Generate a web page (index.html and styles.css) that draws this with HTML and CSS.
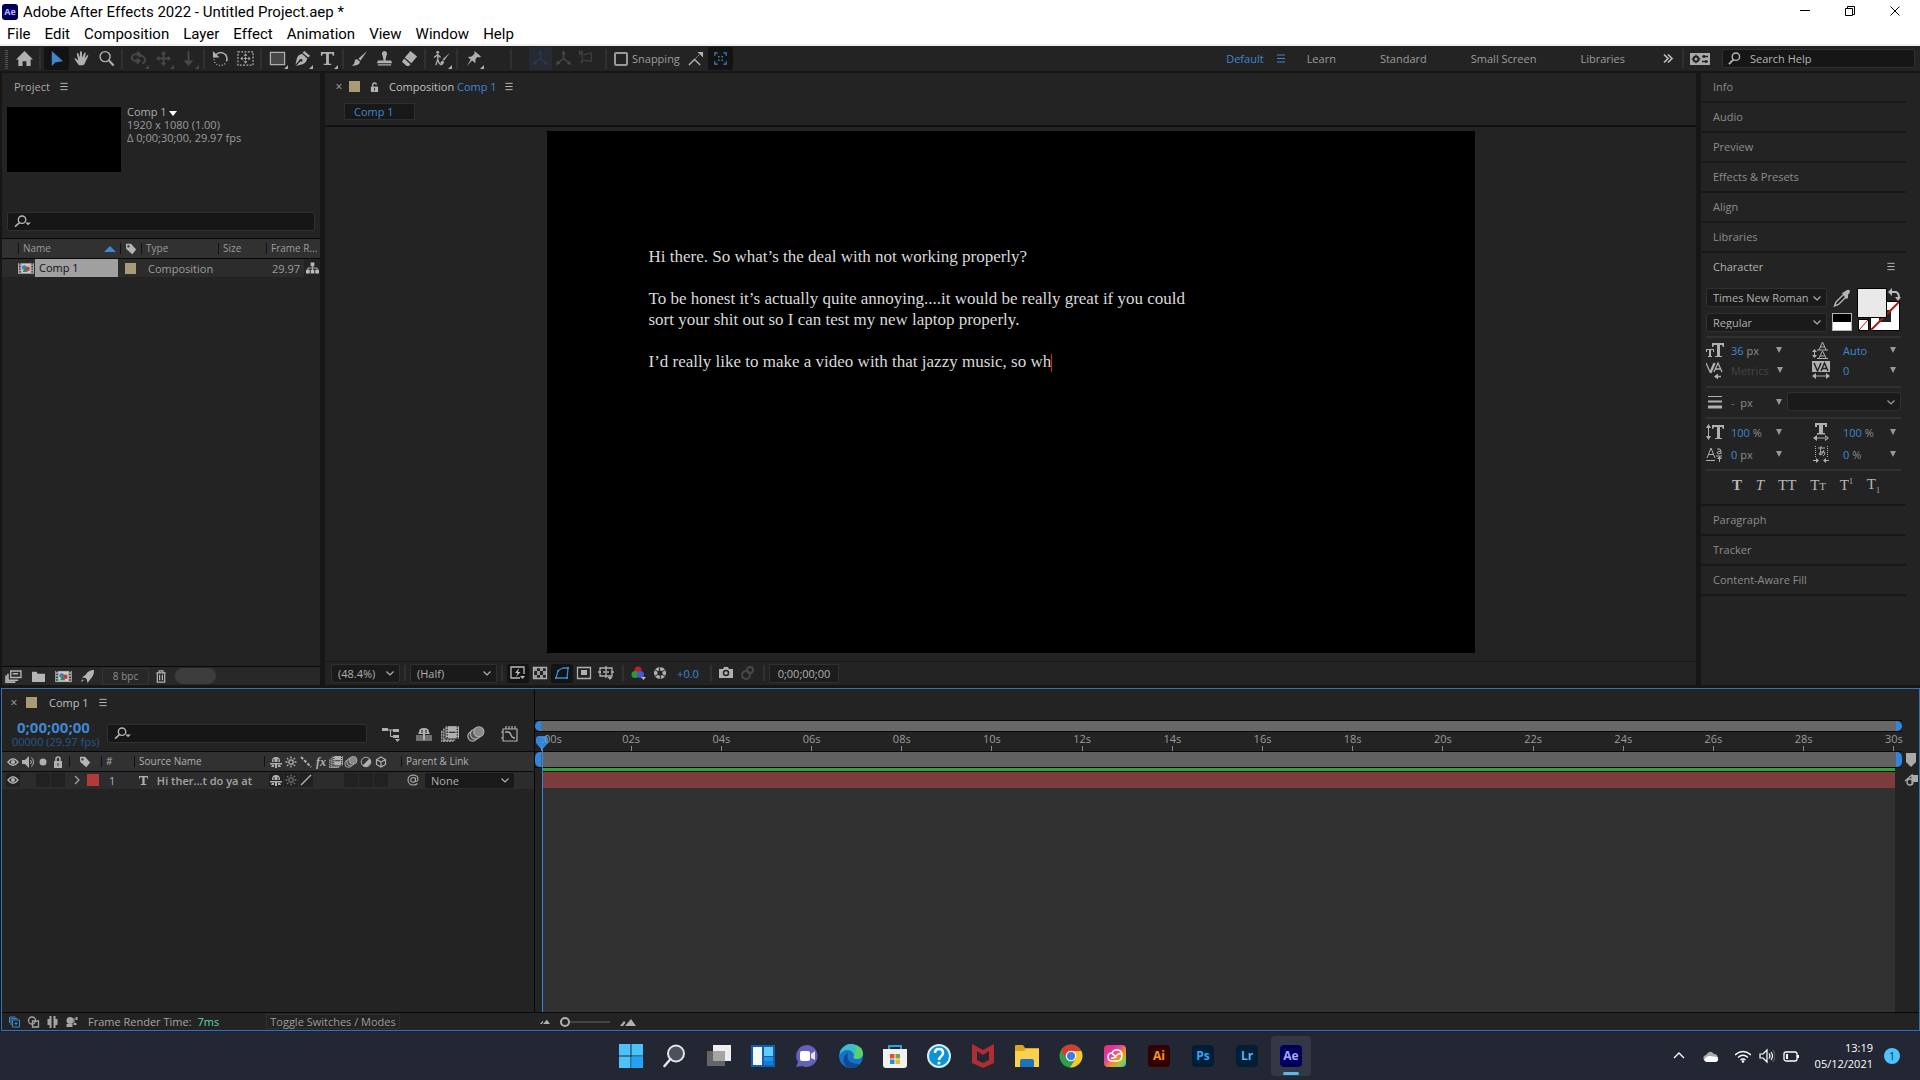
FILE: index.html
```html
<!DOCTYPE html>
<html lang="en">
<head>
  <meta charset="UTF-8">
  <title>Adobe After Effects 2022 - Untitled Project.aep *</title>
  <link rel="stylesheet" href="styles.css">
</head>
<body>
  <!-- shared icons -->
  <svg class="sprite" aria-hidden="true">
    <symbol id="menu" viewBox="0 0 10 10"><path d="M1 1.500h8M1 5h8M1 8.500h8" stroke="currentColor" stroke-width="1.100"/></symbol>
    <symbol id="chev" viewBox="0 0 10 10"><path d="M1.500 3.500 5 7l3.500-3.500" fill="none" stroke="currentColor" stroke-width="1.200"/></symbol>
    <symbol id="tri" viewBox="0 0 8 8"><path d="M1 1h6L4 7z" fill="currentColor"/></symbol>
    <symbol id="corner" viewBox="0 0 4 4"><path d="M4 0v4H0z" fill="currentColor"/></symbol>
    <symbol id="find" viewBox="0 0 18 14"><circle cx="8.500" cy="5" r="4" fill="none" stroke="currentColor" stroke-width="1.500"/><path d="M6 8 1 12.500" stroke="currentColor" stroke-width="1.700"/><path d="M12 8h6l-3 3z" fill="currentColor"/></symbol>
    <symbol id="tag" viewBox="0 0 14 14"><path fill="currentColor" fill-rule="evenodd" d="M1 2q0-1 1-1h5l6 6.500L8.500 13 1.500 7zM4 2.500A1.400 1.400 0 1 0 4 5.300a1.400 1.400 0 0 0 0-2.800z"/></symbol>
    <symbol id="comp" viewBox="0 0 18 14"><path fill="#aaa" d="M0 1h18v12H0z"/><path d="M2 1v12M16 1v12" stroke="#222" stroke-width="1.600" stroke-dasharray="1.500 1.500"/><path fill="#ccc" d="M4 2h10v10H4z"/><circle cx="7" cy="6" r="2.600" fill="#3b7fc0"/><path d="M9 5h4v4.500H9z" fill="#c03b33"/><path d="m8 6.500 3 4.500H5z" fill="#368c4a"/></symbol>
    <symbol id="eye" viewBox="0 0 14 12"><path fill="none" stroke="currentColor" stroke-width="1.500" d="M2 6q5-6.500 10 0-5 6.500-10 0z"/><circle cx="7" cy="6" r="2.100" fill="currentColor"/></symbol>
    <symbol id="shy" viewBox="0 0 14 12"><path fill="currentColor" d="M3 5q0-4 4-4t4 4v1H3zM1 7h12v1.500H1zM6 8h2v4H6zM3 9h2v2H2zM9 9h2l1 2H9z"/><path d="M5 3v3M9 3v3" stroke="#333"/></symbol>
    <symbol id="sun" viewBox="0 0 12 12"><circle cx="6" cy="6" r="2.200" fill="none" stroke="currentColor" stroke-width="1.300"/><path d="M6 .5v2M6 9.500v2M.5 6h2M9.500 6h2M2 2l1.400 1.400M8.600 8.600 10 10M10 2 8.600 3.400M3.400 8.600 2 10" stroke="currentColor" stroke-width="1.300"/></symbol>
    <symbol id="film" viewBox="0 0 16 14"><path fill="currentColor" d="M4 0h12v11H4z"/><path d="M5.500 0v11M14.500 0v11" stroke="#222" stroke-width="1.200" stroke-dasharray="1.200 1.200"/><path d="M7 5.500h6" stroke="#222"/><path d="M2.500 2v10.500H13M.7 4v9.300H11" fill="none" stroke="currentColor" stroke-width="1.200" stroke-dasharray="2 .6"/></symbol>
    <symbol id="blur" viewBox="0 0 16 14"><circle cx="5" cy="9" r="4.300" fill="#444" stroke="currentColor"/><circle cx="7.500" cy="7" r="4.500" fill="#555" stroke="currentColor"/><circle cx="10.500" cy="5" r="4.500" fill="#888" stroke="currentColor"/></symbol>
    <symbol id="hills" viewBox="0 0 16 8"><path d="m5 8 6-7 5 7zM0 8l4-5 1.500 1.500L3 8z" fill="currentColor"/></symbol>
    <symbol id="axis" viewBox="0 0 16 16"><path d="M8 8V2M8 8l-5 4M8 8l5 4" stroke="currentColor" stroke-width="1.500"/><path d="m8 0 2 4H6zM1 14l1-4 3 3zM15 14l-1-4-3 3z" fill="currentColor"/></symbol>
  </svg>

  <header>
    <div class="titlebar">
      <span class="app-badge">Ae</span>
      <span class="window-title">Adobe After Effects 2022 - Untitled Project.aep *</span>
      <div class="window-buttons">
        <button aria-label="Minimise"><svg viewBox="0 0 12 12"><path d="M1 5.500h10" stroke="#000"/></svg></button>
        <button aria-label="Restore"><svg viewBox="0 0 12 12"><path d="M1.500 3.500h7v7h-7zM3.500 3V1.500h7v8H9" fill="none" stroke="#000"/></svg></button>
        <button aria-label="Close"><svg viewBox="0 0 12 12"><path d="m1.500 1.500 9 9m0-9-9 9" stroke="#000"/></svg></button>
      </div>
    </div>
    <nav class="menubar">
      <button>File</button><button>Edit</button><button>Composition</button><button>Layer</button><button>Effect</button><button>Animation</button><button>View</button><button>Window</button><button>Help</button>
    </nav>
  </header>

  <div class="toolbar">
    <div class="tools">
      <i class="grip"></i>
      <button aria-label="Home"><svg viewBox="0 0 18 18"><path fill="currentColor" d="M9 1 0 10h2.500v7H7v-5h4v5h4.500v-7H18z"/></svg></button>
      <i class="sep"></i>
      <button class="on" aria-label="Selection"><svg viewBox="0 0 18 18"><path fill="currentColor" d="M4 1v16l4-4 8-1z"/></svg></button>
      <button aria-label="Hand"><svg viewBox="0 0 18 18"><path fill="currentColor" d="M6 16 1.500 9.500q0-1.500 2 0L5.500 11 4 4q.8-1.800 1.800 0L7 8 7.500 2q1-1.800 1.900 0L9.700 8 12 3q1.500-1.200 1.500.6L12.300 9l2.700-3.500q1.600-.5 1 1.200L12.500 14q-.5 3-6.500 2z"/></svg></button>
      <button aria-label="Zoom"><svg viewBox="0 0 18 18"><circle cx="7.500" cy="7" r="5.300" fill="none" stroke="currentColor" stroke-width="1.500"/><path d="m11.500 11 5 5.500" stroke="currentColor" stroke-width="2.300"/></svg></button>
      <i class="sep"></i>
      <button disabled aria-label="Orbit"><svg viewBox="0 0 18 18"><path fill="none" stroke="currentColor" stroke-width="2" d="M8 12q-7-1-6-5 2-4 8-2t6 6q-1 3-3 3"/><path fill="currentColor" d="m7 8 5 3-5 5zM6 4l3-3 4 5-3 2z"/></svg><svg class="corner"><use href="#corner"/></svg></button>
      <button disabled aria-label="Pan camera"><svg viewBox="0 0 18 18"><path fill="currentColor" d="M9 1 6 4.500h2V8H4.500V6L1 9l3.500 3v-2H8v3.500H6L9 17l3-3.500h-2V10h3.500v2L17 9l-3.500-3v2H10V4.500h2z"/></svg><svg class="corner"><use href="#corner"/></svg></button>
      <button disabled aria-label="Dolly"><svg viewBox="0 0 18 18"><path fill="currentColor" d="M8 1h2v10h4l-5 6-5-6h4z"/></svg><svg class="corner"><use href="#corner"/></svg></button>
      <i class="sep"></i>
      <button aria-label="Rotation"><svg viewBox="0 0 18 18"><path fill="none" stroke="currentColor" stroke-width="1.700" d="M3.500 5.500Q9 0 14.500 5q2 3 1 7"/><path fill="none" stroke="currentColor" stroke-width="1.500" stroke-dasharray="1 2" d="M14 14.500Q8 18.500 3.500 14q-2-3-1-7"/><path d="M1 1v7h7z" fill="currentColor"/></svg></button>
      <button aria-label="Pan behind"><svg viewBox="0 0 18 18"><rect x="1" y="2" width="16" height="14" fill="none" stroke="currentColor" stroke-width="1.300" stroke-dasharray="2 1.500"/><path fill="currentColor" d="m9 3.500 2 2.500H7zM9 14.500 7 12h4zM3.500 9 6 7v4zM14.500 9 12 7v4z"/><path d="M9 7v4M7 9h4" stroke="currentColor"/></svg></button>
      <i class="sep"></i>
      <button aria-label="Rectangle"><svg viewBox="0 0 18 18"><path fill="#484848" stroke="currentColor" stroke-width="1.300" d="M1.500 2.500h15v13h-15z"/></svg><svg class="corner"><use href="#corner"/></svg></button>
      <button aria-label="Pen"><svg viewBox="0 0 18 18"><path fill="currentColor" d="m11 1 6 5-2 2-6-5zM8.500 4 14 9q-1 6-8 7l-4 1 5-5q2 1 2-1t-2-1.500T5.500 11L1.500 15.500 3 9q1-4 5.500-5z"/></svg><svg class="corner"><use href="#corner"/></svg></button>
      <button aria-label="Type"><svg viewBox="0 0 18 18"><path fill="currentColor" d="M2 2h14v4h-1.500L14 4h-3.500v10.500H13V16H5v-1.500h2.500V4H4l-.5 2H2z"/></svg><svg class="corner"><use href="#corner"/></svg></button>
      <i class="sep"></i>
      <button aria-label="Brush"><svg viewBox="0 0 18 18"><path fill="currentColor" d="M17 1 8 9l2 2.500zM7 10l2.500 2.500Q9 17 1 16.500 4 15 4 12t3-2z"/></svg></button>
      <button aria-label="Clone stamp"><svg viewBox="0 0 18 18"><path fill="currentColor" d="M9 1a3 3 0 0 1 2 5l-1 5h6l1 3H1l1-3h6L7 6a3 3 0 0 1 2-5zM2 15h14v1.500H2z"/></svg></button>
      <button aria-label="Eraser"><svg viewBox="0 0 18 18"><path fill="currentColor" d="m10 1 7 6-6 7-7-6zM3.300 9 10 15l-1.500 2H6l-5-4.500z"/></svg></button>
      <i class="sep"></i>
      <button aria-label="Roto brush"><svg viewBox="0 0 18 18"><circle cx="5" cy="2.500" r="1.500" fill="currentColor"/><path d="M5 5v5l-2 6M5 10l2 5M1 8l4-3 3 3" fill="none" stroke="currentColor" stroke-width="1.400"/><path fill="currentColor" d="m18 3-8 7 1.500 1.500zM10 11l2 2q-2 4-5 3 1-1 1-3z"/></svg><svg class="corner"><use href="#corner"/></svg></button>
      <i class="sep"></i>
      <button aria-label="Puppet pin"><svg viewBox="0 0 18 18"><path fill="currentColor" d="m10 1 7 6-2 1-2-.5L11 10v4l-3.500-3L2 17l4-7-3-2.500 4-.5 3-3z"/></svg><svg class="corner"><use href="#corner"/></svg></button>
      <i class="sep far"></i>
      <button disabled class="axis axis-on" aria-label="Local axis"><svg><use href="#axis"/></svg></button>
      <button disabled class="axis" aria-label="World axis"><svg><use href="#axis"/></svg></button>
      <button disabled class="axis" aria-label="View axis"><svg viewBox="0 0 18 18"><path d="M3 3l3 2 8-2v9l-8-1-3 3 2-5zM1 1l4 1-3 3z" fill="none" stroke="currentColor"/></svg></button>
      <i class="sep near"></i>
      <label class="snapping"><input type="checkbox">Snapping</label>
      <button aria-label="Snap edges"><svg viewBox="0 0 18 18"><path d="m2 16 6-6 6 6" fill="none" stroke="currentColor" stroke-width="1.500"/><path d="m9 9 4-4" stroke="currentColor" stroke-dasharray="2 1"/><path d="M11 2h6v6z" fill="currentColor"/></svg></button>
      <button class="on" aria-label="Snap features"><svg viewBox="0 0 18 18"><path d="M3 6V3h3M12 3h3v3M15 12v3h-3M6 15H3v-3M7 8V7h1M10 7h1v1M11 10v1h-1M8 11H7v-1" fill="none" stroke="currentColor" stroke-width="1.200"/></svg></button>
    </div>
    <div class="workspaces">
      <button class="blue">Default<svg><use href="#menu"/></svg></button>
      <button>Learn</button>
      <button>Standard</button>
      <button>Small Screen</button>
      <button>Libraries</button>
      <button class="more" aria-label="More workspaces"><svg viewBox="0 0 10 10"><path d="m1 1 4 4-4 4M5 1l4 4-4 4" fill="none" stroke="#bbb" stroke-width="1.700"/></svg></button>
    </div>
    <div class="help">
      <button aria-label="Settings"><svg viewBox="0 0 20 12"><path d="M0 0h20v12H0z" fill="#aaa"/><circle cx="6" cy="6" r="2.500" fill="none" stroke="#222" stroke-width="2"/><path d="M6 1.500v9M1.500 6h9" stroke="#222" stroke-dasharray="1.500 6"/><path d="M12 3.500h6M12 8.500h6M14 2v3M16 7v3" stroke="#222" stroke-width="1.500"/></svg></button>
      <label class="search-help"><svg viewBox="0 0 14 14"><circle cx="8.500" cy="5" r="4" fill="none" stroke="currentColor" stroke-width="1.500"/><path d="m6 8-5 5" stroke="currentColor" stroke-width="2"/></svg><input type="text" placeholder="Search Help" aria-label="Search Help"></label>
    </div>
  </div>

  <main class="panels">
    <section class="panel project">
      <div class="tab-row"><span>Project</span><button aria-label="Panel menu"><svg><use href="#menu"/></svg></button></div>
      <div class="preview">
        <div class="thumb"></div>
        <p><b>Comp 1 <svg viewBox="0 0 10 6"><path d="M0 0h10L5 6z" fill="#fff"/></svg></b><br>1920 x 1080 (1.00)<br>Δ 0;00;30;00, 29.97 fps</p>
      </div>
      <label class="search"><svg><use href="#find"/></svg><input type="text" aria-label="Search project"></label>
      <table class="items">
        <colgroup><col class="c-icon"><col class="c-name"><col class="c-tag"><col class="c-type"><col class="c-size"><col class="c-rate"><col></colgroup>
        <thead>
          <tr><th></th><th><span class="between">Name <svg viewBox="0 0 12 6"><path d="M0 6 6 0l6 6z" fill="#3e87cf"/></svg></span></th><th><svg class="i14"><use href="#tag"/></svg></th><th>Type</th><th>Size</th><th>Frame R...</th><th></th></tr>
        </thead>
        <tbody>
          <tr><td colspan="2"><span class="item-name"><svg><use href="#comp"/></svg><span>Comp 1</span></span></td><td><i class="swatch"></i></td><td>Composition</td><td></td><td class="num">29.97</td><td class="net"><svg viewBox="0 0 14 12"><path d="M5 0h4v4H5zM0 8h4v4H0zM5 8h4v4H5zM10 8h4v4h-4z" fill="#bbb"/><path d="M7 4v4M2 8V6h10v2" fill="none" stroke="#bbb"/></svg></td></tr>
        </tbody>
      </table>
      <div class="project-footer">
        <button aria-label="Interpret footage"><svg viewBox="0 0 18 14"><path d="M6 1h11v7H6z" fill="none" stroke="currentColor" stroke-width="1.500"/><path d="M8 4h6M3 4v7h11M1 6v7h10" fill="none" stroke="currentColor" stroke-width="1.800"/></svg></button>
        <button aria-label="New folder"><svg viewBox="0 0 18 14"><path d="M2 2h5l1 2h8v9H2z" fill="currentColor"/></svg></button>
        <button aria-label="New composition"><svg><use href="#comp"/></svg></button>
        <button aria-label="Project settings"><svg viewBox="0 0 18 14"><path d="M15 0q-6 0-9 5L2 8l4 .5L7 10l1 4 3-4q4-4 4-10zM2 10l2 1-3 2z" fill="currentColor"/></svg></button>
        <button class="bpc">8 bpc</button>
        <button aria-label="Delete"><svg viewBox="0 0 12 14"><path d="M1 3h10M4 3V1h4v2M2 3v10h8V3M4.500 5v6M7.500 5v6" fill="none" stroke="currentColor" stroke-width="1.300"/></svg></button>
        <i class="pill"></i>
      </div>
    </section>

    <section class="panel composition">
      <div class="tab-row">
        <button class="close">×</button><i class="swatch"></i>
        <svg class="lock" viewBox="0 0 10 11"><path d="M1 5h8v6H1z" fill="#b5b5b5"/><path d="M3 5V3q0-2 2-2t2 2" fill="none" stroke="#b5b5b5" stroke-width="1.500"/><path d="M5 6.500v3" stroke="#222"/></svg>
        <span class="light">Composition <span class="blue">Comp 1</span></span>
        <button aria-label="Panel menu"><svg><use href="#menu"/></svg></button>
      </div>
      <div class="crumbs"><button class="blue">Comp 1</button></div>
      <div class="viewer">
        <div class="stage">
          <p>Hi there. So what’s the deal with not working properly?</p>
          <p>To be honest it’s actually quite annoying....it would be really great if you could<br>sort your shit out so I can test my new laptop properly.</p>
          <p>I’d really like to make a video with that jazzy music, so wh<i class="caret"></i></p>
        </div>
      </div>
      <div class="viewer-footer">
        <span class="pick zoom-pick"><select aria-label="Magnification"><option>(48.4%)</option></select><svg><use href="#chev"/></svg></span>
        <i class="sep"></i>
        <span class="pick res-pick"><select aria-label="Resolution"><option>(Half)</option></select><svg><use href="#chev"/></svg></span>
        <i class="sep"></i>
        <button class="on plain" aria-label="Fast previews"><svg viewBox="0 0 16 14"><path d="M10 12H1V1h13v7" fill="none" stroke="currentColor" stroke-width="1.300"/><path d="M9 2 5 7h2.500L6 11l4.500-5H8z" fill="currentColor"/><path d="M10 10h5l-2.500 3z" fill="currentColor"/></svg></button>
        <button aria-label="Transparency grid"><svg viewBox="0 0 16 14"><path d="M1.500 1.500h13v11h-13z" fill="none" stroke="currentColor" stroke-width="1.300"/><path d="M2 2h3v3H2zM8 2h3v3H8zM5 5h3v4H5zM11 5h3v4h-3zM2 9h3v3H2zM8 9h3v3H8z" fill="#999"/></svg></button>
        <button class="on" aria-label="Mask visibility"><svg viewBox="0 0 16 14"><path d="m2 12 2-7q2-2 5-3h5l-1 10z" fill="none" stroke="currentColor" stroke-width="1.300"/><path d="M1 11h2v2H1zM3 4h2v2H3zM13 1h2v2h-2zM12 11h2v2h-2z" fill="currentColor"/></svg></button>
        <button aria-label="Region of interest"><svg viewBox="0 0 16 14"><path d="M1.500 1.500h13v11h-13z" fill="none" stroke="currentColor" stroke-width="1.300"/><path d="M5 4h6v5H5z" fill="currentColor"/></svg></button>
        <button aria-label="Grid and guides"><svg viewBox="0 0 16 14"><path d="M2 2h12v8H2zM8 0v5M8 7v5M0 6h3M5 6h6M13 6h3" fill="none" stroke="currentColor" stroke-width="1.300"/><path d="M9.500 11h5L12 14z" fill="currentColor"/></svg></button>
        <i class="sep wide"></i>
        <button aria-label="Channels"><svg viewBox="0 0 16 14"><circle cx="8" cy="4" r="3.500" fill="#c82020"/><circle cx="5" cy="8.500" r="3.500" fill="#22a02c"/><circle cx="10.500" cy="8.500" r="3.500" fill="#4457d8"/><path d="M11 11h5l-2.500 3z" fill="#bbb"/></svg></button>
        <button aria-label="Exposure"><svg viewBox="0 0 16 14"><circle cx="8" cy="7" r="4.300" fill="none" stroke="currentColor" stroke-width="3.500"/><path d="m8 1-1 5M13 4 9 6M13 10l-4-2M8 13l1-5M3 10l4-2M3 4l4 2" stroke="#222"/></svg></button>
        <button class="blue text">+0.0</button>
        <i class="sep wide"></i>
        <button aria-label="Snapshot"><svg viewBox="0 0 16 14"><path d="M1 3h4l1-2h4l1 2h4v9H1z" fill="currentColor"/><circle cx="8" cy="7" r="2.500" fill="none" stroke="#222" stroke-width="1.500"/></svg></button>
        <button disabled aria-label="Show snapshot"><svg viewBox="0 0 16 14"><circle cx="6" cy="9" r="4" fill="none" stroke="currentColor" stroke-width="2"/><circle cx="10" cy="4" r="3" fill="none" stroke="currentColor" stroke-width="2"/></svg></button>
        <i class="sep"></i>
        <button class="time-box">0;00;00;00</button>
      </div>
    </section>

    <aside class="panel side">
      <button class="fold">Info</button>
      <button class="fold">Audio</button>
      <button class="fold">Preview</button>
      <button class="fold">Effects &amp; Presets</button>
      <button class="fold">Align</button>
      <button class="fold">Libraries</button>
      <div class="character">
        <div class="char-title"><span>Character</span><button aria-label="Panel menu"><svg><use href="#menu"/></svg></button></div>
        <div class="font-row">
          <div class="fonts">
            <span class="pick"><select aria-label="Font family"><option>Times New Roman</option></select><svg><use href="#chev"/></svg></span>
            <span class="pick"><select aria-label="Font style"><option>Regular</option></select><svg><use href="#chev"/></svg></span>
          </div>
          <div class="droppers">
            <button aria-label="Eyedropper"><svg viewBox="0 0 18 18"><path d="m3 13 8-8 2.500 2.500-8 8L1.500 17z" fill="none" stroke="#b5b5b5" stroke-width="1.400"/><path d="m9 4 2-1 3-2q3-1 3 2l-2 3v3l-2 1z" fill="#b5b5b5"/></svg></button>
            <i class="bw"></i>
          </div>
          <svg class="colours" viewBox="0 0 44 44"><path d="M13.500 13.500h29v29h-29z" fill="#fff" stroke="#000"/><path d="m14 42 28-28" stroke="#a5201c" stroke-width="2"/><path d="M22 22h12v12H22z" fill="#222"/><path d="m22 34 12-12" stroke="#a5201c" stroke-width="2"/><path d="M.5.5h29v29H.5z" fill="#e9e9e9" stroke="#000"/><path d="M1.500 31.500h10v11h-10z" fill="#fff" stroke="#000"/><path d="m2 42 9-10" stroke="#a5201c"/><path d="M34 4h5q3 1 3 6" fill="none" stroke="#bbb" stroke-width="2"/><path d="M31 4l4-4v8zM38 9h6l-3 4z" fill="#bbb"/></svg>
        </div>
        <div class="metrics">
          <label><svg viewBox="0 0 18 18"><path d="M6 2h12v4h-1l-1-2h-2v11h2v1H9v-1h2V4H8L7 6H6zM0 8h8v3H7V9H5v6h1v1H2v-1h1V9H1v2H0z" fill="currentColor"/></svg><span class="v"><a href="#">36</a> px</span><svg class="tri"><use href="#tri"/></svg></label>
          <label><svg viewBox="0 0 18 18"><path d="m7 9 3.500-8L14 9M8 6h5M5 9h11M7 17l3.500-7 3.500 7M8 15h5M5 17.500h11M2.500 9v7" fill="none" stroke="currentColor"/><path d="M0 11h5L2.500 8zM0 14h5l-2.500 3z" fill="currentColor"/></svg><span class="v"><a href="#">Auto</a></span><svg class="tri"><use href="#tri"/></svg></label>
          <label><svg viewBox="0 0 18 18"><path d="m0 2 4 9 4-9M8 11l4-9 4 9M9.500 8h5M5 12 9 2M9 15.500h6" fill="none" stroke="currentColor" stroke-width="1.300"/><path d="m8 15.500 4-3v6z" fill="currentColor"/></svg><span class="v dim">Metrics</span><svg class="tri"><use href="#tri"/></svg></label>
          <label><svg viewBox="0 0 18 18"><path d="M0 0h18v11H0z" fill="currentColor"/><path d="m2 2 3.500 8L9 2M9 10l3.500-8L16 10M10.500 7.500h4" fill="none" stroke="#222" stroke-width="1.500"/><path d="M2 15h14" stroke="currentColor"/><path d="m0 15 4-3v6zM18 15l-4-3v6z" fill="currentColor"/></svg><span class="v"><a href="#">0</a></span><svg class="tri"><use href="#tri"/></svg></label>
        </div>
        <div class="stroke-row">
          <label><svg viewBox="0 0 18 18"><path d="M2 3.500h14" stroke="currentColor"/><path d="M2 8.500h14" stroke="currentColor" stroke-width="2"/><path d="M2 14h14" stroke="currentColor" stroke-width="3"/></svg><span class="v"><a href="#">-</a>&nbsp; px</span><svg class="tri"><use href="#tri"/></svg></label>
          <span class="pick"><select aria-label="Stroke order"><option></option></select><svg><use href="#chev"/></svg></span>
        </div>
        <div class="metrics">
          <label><svg viewBox="0 0 18 18"><path d="M6 2h12v4h-1l-1-2h-2v11h2v1H9v-1h2V4H8L7 6H6zM0 5l2.500-4L5 5zM0 13h5l-2.500 4zM2 4h1v10H2z" fill="currentColor"/></svg><span class="v"><a href="#">100</a> %</span><svg class="tri"><use href="#tri"/></svg></label>
          <label><svg viewBox="0 0 18 18"><path d="M3 0h12v4h-2V2h-2v8h2v1.500H5V10h2V2H5v2H3zM3 14.500h12v1H3zM1 15l4-3v6zM17 15l-4-3v6z" fill="currentColor"/></svg><span class="v"><a href="#">100</a> %</span><svg class="tri"><use href="#tri"/></svg></label>
          <label><svg viewBox="0 0 18 18"><path d="m1 13 4-10 4 10M2.500 9.500h5M0 15.500h9M11 4q4-1 4 2v3M15 6q-4 0-4 2 2 2 4 0M10 11h6M13.500 13v4" fill="none" stroke="currentColor"/><path d="m11 14 2.500-3 2.500 3z" fill="currentColor"/></svg><span class="v"><a href="#">0</a> px</span><svg class="tri"><use href="#tri"/></svg></label>
          <label><svg viewBox="0 0 18 18"><path d="M3.500 1v11M15.500 1v11" stroke="currentColor" stroke-dasharray="1 1"/><path d="M6 3h7M9 1q-1 5 0 9M12 5q-1 5-4 5-2-2 1-3 4-1 4 1t-2 3M1 15.500h4M13 15.500h4" fill="none" stroke="currentColor"/><path d="m4 13 3 2.500L4 18zM14 13l-3 2.500 3 2.500z" fill="currentColor"/></svg><span class="v"><a href="#">0</a> %</span><svg class="tri"><use href="#tri"/></svg></label>
        </div>
        <div class="faux">
          <button><b>T</b></button><button><em>T</em></button><button>TT</button><button>T<small>T</small></button><button>T<sup>1</sup></button><button>T<sub>1</sub></button>
        </div>
      </div>
      <button class="fold">Paragraph</button>
      <button class="fold">Tracker</button>
      <button class="fold">Content-Aware Fill</button>
    </aside>
  </main>

  <section class="timeline">
    <div class="layers">
      <div class="tab-row"><button class="close">×</button><i class="swatch"></i><span class="light">Comp 1</span><button aria-label="Panel menu"><svg><use href="#menu"/></svg></button></div>
      <div class="time-row">
        <div class="timecode"><b>0;00;00;00</b><span>00000 (29.97 fps)</span></div>
        <label class="search"><svg><use href="#find"/></svg><input type="text" aria-label="Search layers"></label>
        <div class="comp-buttons">
          <button aria-label="Mini-flowchart"><svg viewBox="0 0 18 16"><path d="M0 2h6v3H0zM11 3h6v3h-6zM11 9h6v3h-6z" fill="currentColor"/><path d="M6 4h5M8.500 4v6.500H11" fill="none" stroke="currentColor"/><path d="M13 13h5l-2.500 3z" fill="currentColor"/></svg></button>
          <button aria-label="Hide shy layers"><svg viewBox="0 0 18 16"><path d="M1 9h16v6H1z" fill="#707070"/><path d="M4 6q0-4 5-4t5 4l1 2H3zM8 8h2v6H8z" fill="currentColor"/><path d="M7 4v3M11 4v3" stroke="#222"/></svg></button>
          <button aria-label="Frame blending"><svg><use href="#film"/></svg></button>
          <button aria-label="Motion blur"><svg><use href="#blur"/></svg></button>
          <button aria-label="Graph editor"><svg viewBox="0 0 18 16"><path d="M2 3h14v12H2zM5 0v3M8 0v3M11 0v3M14 0v3M2 6H0M2 12H0" fill="none" stroke="currentColor" stroke-width="1.200"/><path d="M4 6h3q2 0 3 3t4 3" fill="none" stroke="currentColor" stroke-width="1.300"/></svg></button>
        </div>
      </div>
      <table class="layer-table">
        <colgroup><col class="l-av"><col class="l-tag"><col class="l-num"><col class="l-name"><col class="l-sw"><col class="l-parent"><col></colgroup>
        <thead>
          <tr>
            <th><span class="cells"><svg><use href="#eye"/></svg><svg viewBox="0 0 14 12"><path d="M1 4h3l4-4v12L4 8H1z" fill="currentColor"/><path d="M9.500 4q2 2 0 4M10.500 1.500q4 4.500 0 9" fill="none" stroke="currentColor"/></svg><svg viewBox="0 0 14 12"><circle cx="7" cy="6" r="3.500" fill="currentColor"/></svg><svg viewBox="0 0 14 12"><path d="M3 5h8v7H3z" fill="currentColor"/><path d="M5 5V3q0-2 2-2t2 2v2" fill="none" stroke="currentColor" stroke-width="1.500"/><path d="M7 7v3" stroke="#333"/></svg></span></th>
            <th><svg class="i14"><use href="#tag"/></svg></th>
            <th>#</th>
            <th>Source Name</th>
            <th><span class="cells"><svg><use href="#shy"/></svg><svg><use href="#sun"/></svg><svg viewBox="0 0 14 12"><path d="m2 1 10 10" stroke="currentColor" stroke-width="2" stroke-dasharray="3 1.500"/></svg><em>fx</em><svg><use href="#film"/></svg><svg><use href="#blur"/></svg><svg viewBox="0 0 14 12"><circle cx="7" cy="6" r="4.800" fill="none" stroke="currentColor"/><path d="M3.500 9.500a5 5 0 0 0 7-7z" fill="currentColor"/></svg><svg viewBox="0 0 14 12"><path d="m7 1 4.500 2.500v5L7 11 2.500 8.500v-5zM2.500 3.500 7 6l4.500-2.500M7 6v5" fill="none" stroke="currentColor" stroke-width="1.200"/></svg></span></th>
            <th>Parent &amp; Link</th>
            <th></th>
          </tr>
        </thead>
        <tbody>
          <tr>
            <td><span class="cells"><i class="box"><svg><use href="#eye"/></svg></i><i></i><i class="box"></i><i class="box"></i></span></td>
            <td><span class="label"><svg viewBox="0 0 10 10"><path d="m3 1 4 4-4 4" fill="none" stroke="#aaa" stroke-width="1.200"/></svg><i class="red"></i></span></td>
            <td class="index">1</td>
            <td class="layer-name"><svg viewBox="0 0 10 10"><path d="M0 0h10v3H9V1.500H6.200v7.300H8V10H2V8.800h1.800V1.500H1V3H0z" fill="currentColor"/></svg> <b>Hi ther...t do ya at</b></td>
            <td><span class="cells"><i class="box"><svg><use href="#shy"/></svg></i><i class="box faint"><svg><use href="#sun"/></svg></i><i class="box"><svg viewBox="0 0 14 12"><path d="M2 11 12 1" stroke="currentColor" stroke-width="1.500"/></svg></i><i></i><i></i><i class="box"></i><i class="box"></i><i class="box"></i></span></td>
            <td><span class="parent"><svg viewBox="0 0 12 12"><path d="M8.500 3.500v3.500q2 1 2.500-1.500Q11 1 6 1 1 1.500 1 6q.5 5 5 5 3 0 4.500-1.500M8.500 5Q7.500 3.300 6 3.500 3.700 4 3.700 6t2 2.300Q8 8.300 8.500 6.500" fill="none" stroke="#aaa" stroke-width="1.100"/></svg><span class="pick"><select aria-label="Parent"><option>None</option></select><svg><use href="#chev"/></svg></span></span></td>
            <td></td>
          </tr>
        </tbody>
      </table>
    </div>

    <div class="time-area">
      <div class="navigator"><i class="handle start"></i><i class="bar"></i><i class="handle end"></i></div>
      <ol class="ruler"><li>:00s</li><li>02s</li><li>04s</li><li>06s</li><li>08s</li><li>10s</li><li>12s</li><li>14s</li><li>16s</li><li>18s</li><li>20s</li><li>22s</li><li>24s</li><li>26s</li><li>28s</li><li>30s</li></ol>
      <div class="work-area"><i class="handle start"></i><i class="bar"></i><i class="handle end"></i></div>
      <div class="tracks"><div class="clip"></div></div>
      <svg class="playhead-cap" viewBox="0 0 12 14"><path d="M0 3q0-3 3-3h6q3 0 3 3v4l-6 7-6-7z" fill="#2f86e0"/></svg>
      <i class="playhead"></i>
    </div>
    <div class="edge">
      <svg viewBox="0 0 12 16"><path d="M1 1h10v9l-5 5-5-5z" fill="#aaa"/></svg>
      <svg viewBox="0 0 14 14"><path d="M8 2h6v7H8z" fill="#aaa"/><circle cx="6" cy="9" r="3" fill="#222" stroke="#aaa" stroke-width="1.300"/><path d="m1 8 7-6v10" fill="none" stroke="#aaa" stroke-width="1.300"/></svg>
    </div>

    <footer class="timeline-footer">
      <div class="status">
        <button class="blue" aria-label="Layer switches"><svg viewBox="0 0 12 12"><path d="M4 4h7v7H4zM2.500 9V2.500H9M1 7V1h6M6 7.500h3M7.500 6v3" fill="none" stroke="currentColor"/></svg></button>
        <button aria-label="Transfer controls"><svg viewBox="0 0 12 12"><circle cx="4.500" cy="4.500" r="3.500" fill="none" stroke="currentColor" stroke-width="1.300"/><path d="M5 5h6v6H5z" fill="none" stroke="currentColor" stroke-width="1.300"/></svg></button>
        <button aria-label="In and out"><svg viewBox="0 0 12 12"><path d="M3 0v12h2V0zM7 0v12h2V0zM1 3h2v6H1zM9 3h2v6H9z" fill="currentColor"/></svg></button>
        <button aria-label="Render time pane"><svg viewBox="0 0 12 12"><circle cx="4.500" cy="4.500" r="3.500" fill="currentColor"/><path d="M1 8h6v3H1zM8 2h1v6H8zM10 1h2v3h-2zM8 7h3v2H8z" fill="currentColor"/></svg></button>
        <span>Frame Render Time:</span> <b>7ms</b>
      </div>
      <button class="toggle">Toggle Switches / Modes</button>
      <div class="zoom">
        <svg class="small"><use href="#hills"/></svg>
        <input type="range" min="0" max="100" value="0" aria-label="Timeline zoom">
        <svg><use href="#hills"/></svg>
      </div>
    </footer>
  </section>

  <nav class="taskbar">
    <div class="apps">
      <button aria-label="Start"><svg viewBox="0 0 24 24"><path d="M0 0h11.500v11.500H0zM12.500 0H24v11.500H12.500zM0 12.500h11.500V24H0zM12.500 12.500H24V24H12.500z" fill="#4cc2fa"/><path d="M12.500 12.500H24V24H12.500z" fill="#20a5f4"/></svg></button>
      <button aria-label="Search"><svg viewBox="0 0 24 24"><circle cx="13" cy="9.500" r="8" fill="#4a525e" stroke="#e2e6ea" stroke-width="2"/><path d="m7.500 15-6 7" stroke="#e2e6ea" stroke-width="2.500" stroke-linecap="round"/></svg></button>
      <button aria-label="Task view"><svg viewBox="0 0 24 24"><path d="M6 1h18v16H6z" fill="#eee"/><path d="M0 7h18v15H0z" fill="#6d6d6d" opacity=".9"/><path d="M6 7h12v10H6z" fill="#a5a5a5"/></svg></button>
      <button aria-label="Widgets"><svg viewBox="0 0 24 24"><path d="M0 1h24v22H0z" fill="#0e62b0"/><path d="M2 3h9v18H2z" fill="#f2f8ff"/><path d="M13 3h9v9h-9z" fill="#62ccfa"/><path d="M13 13h9v4h-9z" fill="#2b91e5"/><path d="M13 17h9v4h-9z" fill="#0f7ce0"/></svg></button>
      <button aria-label="Chat"><svg viewBox="0 0 24 24"><path d="M12 1a11 11 0 1 1-5 21l-6 1 2-5A11 11 0 0 1 12 1z" fill="#6660bd"/><rect x="5" y="7" width="10" height="10" rx="2" fill="#fff"/><path d="m16 10 4-3v9l-4-2z" fill="#e6e6ff"/></svg></button>
      <button aria-label="Edge"><svg viewBox="0 0 24 24"><circle cx="12" cy="12" r="12" fill="#1674c8"/><path d="M1 8Q5-1 14 0q10 2 10 10-1 5-7 5-4-1-2-3 0-5-6-6-5 0-8 4z" fill="#3cbdc8"/><path d="M16 1q8 3 8 9-1 5-7 5-3-1-2-3 3-4 1-11z" fill="#58d36c"/><path d="M9 9q-3 11 12 11-6 6-13 3-5-4-3-10 1-3 4-4z" fill="#124b94"/></svg></button>
      <button aria-label="Store"><svg viewBox="0 0 24 24"><path d="M6 7V2h12v5" fill="none" stroke="#2ba1dd" stroke-width="2"/><path d="M0 5h24v16q0 3-3 3H3q-3 0-3-3z" fill="#f1f1f1"/><path d="M7 10h4.500v4.500H7z" fill="#e0522c"/><path d="M12.500 10H17v4.500h-4.500z" fill="#74a933"/><path d="M7 15.500h4.500V20H7z" fill="#258fd0"/><path d="M12.500 15.500H17V20h-4.500z" fill="#f0b429"/></svg></button>
      <button aria-label="Get help"><svg viewBox="0 0 24 24"><circle cx="12" cy="12" r="11" fill="#0a94d4" stroke="#d6ecf7" stroke-width="2"/><path d="M8 9q0-4 4-4t4 4q0 2-2 3.500T12 16" fill="none" stroke="#fff" stroke-width="2.500"/><circle cx="12" cy="19" r="1.600" fill="#fff"/></svg></button>
      <button aria-label="McAfee"><svg viewBox="0 0 24 24"><path d="m1 0 11 6 11-6v19l-11 5-11-5zM6 7v9l6 3 6-3V7l-6 4z" fill="#b02d32" fill-rule="evenodd"/></svg></button>
      <button aria-label="File Explorer"><svg viewBox="0 0 24 24"><path d="M0 2q0-1 1-1h7l2 3h14v18H0z" fill="#dda423"/><path d="M0 7h9l2-2h13v18H0z" fill="#fad14f"/><path d="M5 23v-6q0-2 2-2h10q2 0 2 2v6z" fill="#1a74bd"/></svg></button>
      <button aria-label="Chrome"><svg viewBox="0 0 24 24"><circle cx="12" cy="12" r="11.500" fill="#2f9e4f"/><path d="M12 .5A11.500 11.500 0 0 1 22 7H12L7 14 2 6.500Q6 .5 12 .5z" fill="#d63c30"/><path d="M12 7h10.500q3 9-4 14-3 2.500-7.500 2.500L17 14z" fill="#fbc72c"/><circle cx="12" cy="12" r="5.300" fill="#fff"/><circle cx="12" cy="12" r="4.200" fill="#3f7ce8"/></svg></button>
      <button aria-label="Creative Cloud"><svg viewBox="0 0 24 24"><defs><linearGradient id="cc" x1="0" y1="0" x2="1" y2="1"><stop offset="0" stop-color="#e6315c"/><stop offset=".35" stop-color="#d83bb5"/><stop offset=".6" stop-color="#f28a2a"/><stop offset=".8" stop-color="#9dca3a"/><stop offset="1" stop-color="#2fb6e5"/></linearGradient></defs><rect x="1" y="1" width="22" height="22" rx="4" fill="url(#cc)"/><path d="M9 17q-4 0-4-4t4-4q2-4 6-3t4 5q0 6-5 6H9zM8 14q3 1 5-2t5-2M9 10q2 0 4 4" fill="none" stroke="#fff" stroke-width="1.500"/></svg></button>
      <button><span class="adobe ai">Ai</span></button>
      <button><span class="adobe ps">Ps</span></button>
      <button><span class="adobe lr">Lr</span></button>
      <button class="active"><span class="adobe ae">Ae</span></button>
    </div>
    <div class="tray">
      <button aria-label="Hidden icons"><svg viewBox="0 0 16 16"><path d="m3 10 5-5 5 5" fill="none" stroke="#fff" stroke-width="1.300"/></svg></button>
      <button aria-label="OneDrive"><svg viewBox="0 0 16 16"><path d="M1 12q-2-4 2-5 4-6 8-1 4 0 4 5-1 2-3 2H3z" fill="#aaa"/><path d="M1 12q2-4 6-4l7 1q3 3-1 5H3z" fill="#fff"/></svg></button>
      <button class="network" aria-label="Network, sound and battery"><svg viewBox="0 0 16 16"><path d="M0 7q8-7 16 0M3 9.500q5-4.500 10 0M5.500 12q2.500-2 5 0" fill="none" stroke="#fff" stroke-width="1.400"/><circle cx="8" cy="13.500" r="1.300" fill="#fff"/></svg><svg viewBox="0 0 16 16"><path d="M1 6h3l4-4v12l-4-4H1zM10 5.500q2 2.500 0 5M12 4q3 4 0 8" fill="none" stroke="#fff" stroke-width="1.200"/><path d="M14 2q4 6 0 12" fill="none" stroke="#667"/></svg><svg viewBox="0 0 16 16"><rect x="1" y="4" width="13" height="9" rx="2" fill="none" stroke="#fff" stroke-width="1.300"/><path d="M3 6h2v5H3zM14 7h2v3h-2z" fill="#fff"/></svg></button>
      <div class="clock">13:19<br>05/12/2021</div>
      <span class="count">1</span>
    </div>
  </nav>
</body>
</html>
```
FILE: styles.css
```css
* {
  box-sizing: border-box;
}

body {
  margin: 0;
  height: 100vh;
  min-height: 900px;
  display: grid;
  grid-template-rows: auto auto minmax(0, 615fr) minmax(0, 343fr) auto;
  background: #161616;
  color: #9c9c9c;
  font: 11px/13px "Open Sans", "Noto Sans", sans-serif;
  overflow: hidden;
}

.sprite {
  position: absolute;
  width: 0;
  height: 0;
}

button, input, select {
  font: inherit;
  color: inherit;
  background: none;
  border: 0;
  padding: 0;
  margin: 0;
}

button {
  display: flex;
  align-items: center;
  justify-content: center;
  flex: none;
  white-space: nowrap;
}

svg {
  flex: none;
}

i {
  flex: none;
  display: block;
}

a {
  color: #3e87cf;
  text-decoration: none;
}

table {
  border-collapse: collapse;
  table-layout: fixed;
  width: 100%;
}

th, td {
  padding: 0;
  font-weight: normal;
  text-align: left;
}

.blue { color: #3e87cf; }
.light { color: #c0c0c0; }
.i14 { width: 14px; height: 12px; display: block; margin: 0 auto; color: #b5b5b5; }

.swatch {
  width: 11px;
  height: 11px;
  background: #a99a78;
}

/* window header */

header {
  background: #fff;
  color: #000;
  font-family: Roboto, "Open Sans", sans-serif;
  border-bottom: 2px solid #f0f0f0;
}

.titlebar {
  display: flex;
  align-items: center;
  height: 24px;
  padding-left: 2px;
  font-size: 15px;
}

.app-badge {
  width: 16px;
  height: 16px;
  margin-right: 5px;
  border-radius: 3px;
  background: #00005b;
  color: #b9b4ff;
  font: bold 9px/16px "Open Sans", sans-serif;
  text-align: center;
}

.window-buttons {
  display: flex;
  gap: 33px;
  margin-left: auto;
  padding: 0 19px 3px 0;
}

.window-buttons svg {
  width: 12px;
  height: 12px;
}

.menubar {
  display: flex;
  gap: 14px;
  height: 20px;
  padding: 1px 0 0 7px;
  font-size: 15px;
}

/* tools */

.toolbar {
  display: flex;
  align-items: center;
  height: 27px;
  background: #232323;
  border-bottom: 2px solid #161616;
}

.tools {
  display: flex;
  align-items: center;
  color: #b0b0b0;
}

.tools button {
  position: relative;
  width: 25px;
  height: 23px;
}

.tools .axis {
  width: 23px;
}

.tools svg {
  width: 17px;
  height: 17px;
}

.tools .corner {
  position: absolute;
  right: 2px;
  bottom: 1px;
  width: 4px;
  height: 4px;
}

button:disabled {
  color: #484848;
}

.tools .axis-on {
  background: #262a33;
  color: #29394f;
}

button.on {
  background: #131313;
  border-radius: 2px;
  color: #3e87cf;
}

button.on.plain {
  color: #bbb;
}

.grip {
  width: 3px;
  height: 20px;
  margin: 0 4px 0 5px;
  background: repeating-linear-gradient(#232323 0 1px, #555 1px 2px);
}

.sep {
  width: 2px;
  height: 20px;
  margin: 0 3px 0 2px;
  background: #303030;
}

.sep.far { margin: 0 17px 0 24px; }
.sep.near { margin: 0 7px; }

.snapping {
  display: flex;
  align-items: center;
  gap: 4px;
  margin-right: 3px;
  color: #9c9c9c;
}

.snapping input {
  appearance: none;
  width: 14px;
  height: 14px;
  border: 2px solid #999;
  border-radius: 2px;
}

.workspaces {
  display: flex;
  align-items: center;
  gap: 44px;
  margin-left: auto;
  padding-right: 9px;
}

.workspaces .blue {
  gap: 12px;
  margin-right: -23px;
}

.workspaces .more {
  margin-left: -6px;
}

.workspaces svg {
  width: 10px;
  height: 11px;
}

.help {
  display: flex;
  align-items: center;
  gap: 12px;
  padding: 0 5px 0 6px;
  border-left: 2px solid #303030;
}

.help button svg {
  width: 20px;
  height: 12px;
}

.search, .search-help {
  display: flex;
  align-items: center;
  background: #161616;
  border: 1px solid #303030;
  border-radius: 2px;
}

.search-help {
  width: 193px;
  height: 19px;
  padding-left: 5px;
  gap: 9px;
  color: #b5b5b5;
}

.search-help svg {
  width: 13px;
  height: 13px;
}

.search-help input {
  flex: 1;
  min-width: 0;
}

.search-help input::placeholder {
  color: #b5b5b5;
  opacity: 1;
}

/* panels */

.panels {
  display: grid;
  grid-template-columns: 318px minmax(0, 1fr) 219px;
  gap: 5px;
  padding: 0 0 3px 2px;
}

.panel {
  display: flex;
  flex-direction: column;
  min-height: 0;
  background: #232323;
}

.tab-row {
  display: flex;
  align-items: center;
  height: 28px;
  gap: 12px;
  padding: 0 0 1px 12px;
  color: #a8a8a8;
}

.tab-row button svg, .char-title svg {
  width: 10px;
  height: 9px;
  color: #b5b5b5;
}

.tab-row span + button {
  margin-left: -3px;
}

.tab-row .close {
  width: 8px;
  font-size: 12px;
  margin-right: -4px;
}

.lock {
  width: 9px;
  height: 10px;
}

.preview {
  display: flex;
  gap: 6px;
  height: 105px;
  padding: 6px 5px;
}

.thumb {
  width: 114px;
  height: 65px;
  background: #000;
}

.preview p {
  margin: -2px 0 0;
}

.preview b {
  font-weight: 500;
  color: #adadad;
}

.preview svg {
  width: 8px;
  height: 5px;
  vertical-align: middle;
}

.search {
  height: 19px;
  color: #b5b5b5;
}

.search svg {
  width: 17px;
  height: 13px;
  margin: 0 6px;
}

.search input {
  flex: 1;
  min-width: 0;
}

.project .search {
  margin: 6px 5px 7px;
}

.c-icon { width: 16px; }
.c-name { width: 102px; }
.c-tag { width: 21px; }
.c-type { width: 77px; }
.c-size { width: 48px; }
.c-rate { width: 38px; }

.items thead, .layer-table thead {
  background: #313131;
  font-size: 10px;
}

.items thead tr, .layer-table thead tr {
  height: 20px;
  border-top: 1px solid #080808;
  border-bottom: 1px solid #080808;
}

.items th + th, .layer-table th + th {
  padding-left: 5px;
  background: linear-gradient(#111, #111) no-repeat 0 4px / 1px 11px;
}

.items th:nth-child(3), .layer-table th:nth-child(2) { padding: 0; }

.items th:nth-child(6) { white-space: nowrap; overflow: visible; }

.items th:nth-child(7), .layer-table th:nth-child(7) {
  background: none;
}

.between {
  display: flex;
  align-items: center;
  justify-content: space-between;
  padding-right: 4px;
}

.between svg {
  width: 12px;
  height: 6px;
}

.items tbody tr {
  height: 18px;
  background: #2c2c2c;
}

.item-name {
  display: flex;
  align-items: center;
  height: 18px;
  padding-left: 16px;
}

.item-name svg {
  width: 16px;
  height: 13px;
  margin-right: 1px;
}

.item-name span {
  flex: 1;
  padding: 2px 4px 3px;
  background: #a0a0a0;
  color: #111;
  margin-right: 2px;
}

.items td:nth-child(2) .swatch {
  margin: 0 auto;
}

.items td:nth-child(3) {
  padding-left: 7px;
}

.items .num {
  text-align: right;
  padding-right: 4px;
}

.items .net {
  background: #232323;
}

.net svg {
  display: block;
  width: 13px;
  height: 12px;
  margin: 0 1px 0 auto;
}

.project-footer {
  display: flex;
  align-items: center;
  gap: 8px;
  height: 19px;
  margin-top: auto;
  padding-left: 3px;
  background: #282828;
  border-top: 1px solid #080808;
  color: #b5b5b5;
}

.project-footer svg {
  width: 17px;
  height: 13px;
}

.project-footer .bpc {
  width: 47px;
  height: 17px;
  margin: 0 -2px 0 -3px;
  border: 1px solid #343434;
  color: #8c8c8c;
  font-size: 10px;
}

.pill {
  width: 41px;
  height: 16px;
  border-radius: 8px;
  background: #3d3d3d;
}

.project-footer button:nth-child(6) svg {
  width: 12px;
}

/* composition viewer */

.composition .tab-row {
  padding-left: 10px;
  gap: 10px;
}

.crumbs {
  height: 24px;
  padding: 2px 0 0 19px;
}

.crumbs button {
  width: 71px;
  height: 17px;
  padding-left: 9px;
  justify-content: flex-start;
  background: #181818;
  border: 1px solid #2e2e2e;
}

.viewer {
  flex: 1;
  min-height: 0;
  display: flex;
  justify-content: center;
  padding: 4px 0 8px;
  border-top: 2px solid #101010;
}

.stage {
  height: 100%;
  aspect-ratio: 16 / 9;
  padding: 115px 0 0 102px;
  background: #000;
  color: #d9d9d9;
  font: 17px/21px "Liberation Serif", serif;
  white-space: nowrap;
}

.stage p {
  margin: 0 0 21px;
}

.caret {
  display: inline-block;
  width: 1px;
  height: 18px;
  background: #e02020;
  vertical-align: bottom;
}

.viewer-footer {
  display: flex;
  align-items: center;
  height: 24px;
  padding: 0 0 1px 6px;
  border-top: 1px solid #181818;
  color: #b0b0b0;
}

.viewer-footer .sep {
  height: 16px;
  margin: 0 4px;
}

.viewer-footer .sep.wide {
  margin: 0 3px 0 5px;
}

.viewer-footer button {
  width: 22px;
  height: 19px;
}

.viewer-footer button svg {
  width: 16px;
  height: 14px;
}

.viewer-footer .text {
  width: 34px;
}

.viewer-footer .time-box {
  width: 70px;
  border: 1px solid #303030;
  background: #1c1c1c;
}

.pick {
  display: grid;
  grid-template-columns: 1fr 18px;
  align-items: center;
  height: 19px;
  background: #1a1a1a;
  border: 1px solid #303030;
  border-radius: 2px;
}

.pick select {
  grid-area: 1 / 1 / 2 / 3;
  appearance: none;
  width: 100%;
  height: 17px;
  padding-left: 6px;
}

.pick svg {
  grid-area: 1 / 2;
  justify-self: center;
  width: 10px;
  height: 10px;
  pointer-events: none;
}

.zoom-pick { width: 69px; }
.res-pick { width: 87px; }

/* right column */

.side {
  padding-right: 14px;
}

.fold {
  justify-content: flex-start;
  height: 30px;
  padding: 0 0 1px 12px;
  border-bottom: 2px solid #181818;
  color: #8c8c8c;
}

.character {
  height: 253px;
  padding: 0 5px;
  border-bottom: 2px solid #181818;
}

.char-title {
  display: flex;
  align-items: center;
  justify-content: space-between;
  height: 27px;
  padding: 0 5px 0 7px;
  margin-bottom: 8px;
  color: #b0b0b0;
}

.font-row {
  display: flex;
  gap: 5px;
  height: 44px;
  color: #b0b0b0;
}

.fonts {
  display: grid;
  gap: 5px;
  flex: 1;
}

.fonts select {
  white-space: nowrap;
}

.droppers {
  display: grid;
  gap: 5px;
}

.droppers svg {
  width: 18px;
  height: 18px;
}

.bw {
  width: 20px;
  height: 18px;
  border: 1px solid #b5b5b5;
  background: linear-gradient(#000 50%, #fff 50%);
}

.colours {
  width: 44px;
  height: 44px;
}

.metrics, .stroke-row {
  display: grid;
  grid-template-columns: 77px 85px;
  align-content: start;
  column-gap: 29px;
  margin-top: 4px;
  padding-top: 2px;
  border-top: 2px solid #303030;
}

.metrics {
  height: 50px;
}

.metrics label, .stroke-row label {
  display: grid;
  grid-template-columns: 18px 1fr 8px;
  align-items: center;
  column-gap: 7px;
  height: 20px;
  color: #b0b0b0;
}

.metrics label:nth-child(2n) {
  column-gap: 13px;
}

.metrics svg, .stroke-row label svg {
  width: 18px;
  height: 18px;
}

.metrics .tri, .stroke-row .tri {
  width: 8px;
  height: 8px;
  color: #999;
}

.v {
  color: #8c8c8c;
  white-space: nowrap;
}

.v.dim { color: #444; }

.stroke-row {
  grid-template-columns: 77px 114px;
  column-gap: 4px;
  margin-top: 0;
  padding-top: 4px;
  height: 31px;
}

.stroke-row + .metrics {
  margin-top: 0;
  height: 52px;
}

.stroke-row + .metrics label {
  height: 22px;
}

.faux {
  display: flex;
  align-items: center;
  justify-content: space-between;
  height: 31px;
  padding: 0 21px 0 26px;
  border-top: 2px solid #303030;
  color: #b8b8b8;
  font: 15px/15px "Liberation Serif", serif;
}

.faux button { display: block; height: 18px; }
.faux small { font-size: 11px; }
.faux sup, .faux sub { font-size: 8px; line-height: 8px; }

/* timeline */

.timeline {
  display: grid;
  grid-template-columns: 532px minmax(0, 1fr) 17px;
  grid-template-rows: minmax(0, 1fr) 18px;
  margin: 0 0 0 1px;
  border: 1px solid #3572b5;
  background: #232323;
}

.timeline .tab-row {
  gap: 12px;
  padding: 0 0 0 8px;
  height: 27px;
}

.time-row {
  display: flex;
  align-items: center;
  height: 35px;
  padding-left: 10px;
}

.timecode {
  display: flex;
  flex-direction: column;
  align-items: flex-start;
  width: 95px;
  color: #24598f;
}

.timecode b {
  margin-left: 5px;
  color: #3e87cf;
  font-size: 15px;
  line-height: 16px;
}

.time-row .search {
  width: 260px;
}

.comp-buttons {
  display: flex;
  gap: 8px;
  margin-left: 15px;
  color: #b0b0b0;
}

.comp-buttons svg {
  width: 18px;
  height: 16px;
}

.comp-buttons button:first-child { margin-right: 7px; }
.comp-buttons button:last-child { margin-left: 8px; }

.l-av { width: 67px; }
.l-tag { width: 32px; }
.l-num { width: 33px; }
.l-name { width: 130px; }
.l-sw { width: 137px; }
.l-parent { width: 117px; }

.layer-table {
  color: #b0b0b0;
}

.layer-table tbody tr {
  height: 17px;
  background: #2c2c2c;
}

.layer-table td {
  line-height: 15px;
}

.cells {
  display: grid;
  grid-template-columns: repeat(8, 14px);
  column-gap: 1px;
  align-items: center;
  padding-left: 4px;
}

.layer-table th .cells {
  padding-left: 0;
}

.layer-table th:first-child .cells {
  padding-left: 4px;
}

.layer-table td:nth-child(5) .cells {
  padding-left: 5px;
}

.cells svg {
  display: block;
  width: 14px;
  height: 12px;
}

.cells em {
  font: italic bold 12px/12px "Liberation Serif", serif;
  text-align: center;
}

.box {
  height: 14px;
  padding-top: 1px;
  background: #212121;
}

.faint { color: #707070; }

.label {
  display: flex;
  align-items: center;
  gap: 5px;
  padding-left: 3px;
}

.label svg {
  width: 10px;
  height: 10px;
}

.red {
  width: 12px;
  height: 12px;
  background: #b43a3a;
}

.layer-table .index {
  padding-left: 8px;
}

.layer-name {
  padding-left: 5px;
  white-space: nowrap;
}

.layer-name svg {
  width: 9px;
  height: 9px;
  margin-right: 6px;
}

.layer-name b {
  font-weight: 600;
  color: #a5a5a5;
}

.parent {
  display: flex;
  align-items: center;
  gap: 6px;
  padding-left: 6px;
}

.parent svg {
  width: 12px;
  height: 12px;
}

.parent .pick {
  width: 89px;
  height: 15px;
  border: 0;
}

.parent .pick svg {
  width: 10px;
  height: 10px;
}

.parent .pick select {
  height: 15px;
}

.time-area {
  position: relative;
  display: flex;
  flex-direction: column;
  min-height: 0;
  padding-top: 31px;
  border-left: 1px solid #080808;
}

.navigator, .work-area {
  display: flex;
}

.navigator {
  height: 12px;
  border: 1px solid #080808;
  border-width: 1px 0;
}

.bar {
  flex: 1;
  background: #686868;
}

.handle {
  width: 6px;
  background: #2f86e0;
}

.handle.start {
  border-radius: 5px 0 0 5px;
}

.handle.end {
  border-radius: 0 5px 5px 0;
}

.ruler {
  position: relative;
  z-index: 1;
  display: flex;
  justify-content: space-between;
  height: 19px;
  margin: 0;
  padding: 0 8px 0 6px;
  list-style: none;
}

.ruler li {
  display: flex;
  flex-direction: column;
  align-items: center;
  width: 0;
  white-space: nowrap;
}

.ruler li:first-child {
  align-items: flex-start;
}

.ruler li::after {
  content: "";
  width: 1px;
  height: 5px;
  margin-top: 1px;
  background: #888;
}

.work-area {
  height: 17px;
  border: 1px solid #080808;
  border-width: 1px 0;
}

.work-area .bar {
  background: #616161;
}

.tracks {
  flex: 1;
  margin: 0 7px;
  background: #313131;
}

.clip {
  height: 20px;
  border-top: 3px solid #2da43c;
  background: linear-gradient(#080808 1px, #7d3c3c 1px);
}

.playhead-cap {
  position: absolute;
  left: 1px;
  top: 47px;
  width: 12px;
  height: 14px;
}

.playhead {
  position: absolute;
  left: 7px;
  top: 60px;
  bottom: 0;
  width: 1px;
  background: #2f86e0;
}

.edge {
  display: flex;
  flex-direction: column;
  align-items: center;
  gap: 4px;
  padding-top: 63px;
}

.edge svg {
  width: 14px;
  height: 16px;
}

.timeline-footer {
  grid-column: 1 / -1;
  display: grid;
  grid-template-columns: 264px 270px 107px 1fr;
  align-items: center;
  border-top: 1px solid #080808;
}

.status {
  display: flex;
  align-items: center;
  gap: 6px;
  padding-left: 6px;
  color: #a5a5a5;
}

.status svg {
  width: 13px;
  height: 12px;
}

.status span {
  margin-left: 4px;
}

.status b {
  color: #62d6a8;
  font-weight: 500;
}

.toggle {
  justify-self: start;
  width: 134px;
  height: 15px;
  border: 1px solid #303030;
}

.zoom {
  display: flex;
  align-items: center;
  gap: 10px;
  padding-left: 4px;
  color: #b0b0b0;
}

.zoom svg {
  width: 16px;
  height: 8px;
}

.zoom .small {
  width: 10px;
  height: 5px;
}

.zoom input {
  appearance: none;
  width: 50px;
  height: 12px;
}

.zoom input::-webkit-slider-runnable-track {
  height: 2px;
  background: #444;
}

.zoom input::-webkit-slider-thumb {
  appearance: none;
  width: 10px;
  height: 10px;
  margin-top: -4px;
  border: 2px solid #b0b0b0;
  border-radius: 50%;
  background: #232323;
}

/* taskbar */

.taskbar {
  display: grid;
  grid-template-columns: 1fr auto 1fr;
  align-items: center;
  height: 49px;
  background: #222733;
  border-top: 1px solid #15243c;
  color: #fff;
}

.apps {
  grid-column: 2;
  display: flex;
  gap: 4px;
  padding-left: 2px;
}

.apps button {
  position: relative;
  width: 40px;
  height: 40px;
  border-radius: 4px;
}

.apps svg {
  width: 24px;
  height: 24px;
}

.apps .active {
  background: #333844;
}

.apps .active::after {
  content: "";
  position: absolute;
  bottom: 1px;
  width: 16px;
  height: 3px;
  border-radius: 2px;
  background: #5cb8ea;
}

.adobe {
  width: 22px;
  height: 22px;
  border-radius: 4px;
  font: bold 12px/21px "Open Sans", sans-serif;
  text-align: center;
}

.ai { background: #330000; color: #ff9a00; }
.ps { background: #001e36; color: #31a8ff; }
.lr { background: #001e36; color: #55b5f5; }
.ae { background: #00005b; color: #a9a4ff; }

.tray {
  display: flex;
  align-items: center;
  justify-content: flex-end;
  padding-right: 20px;
}

.tray svg {
  width: 16px;
  height: 16px;
}

.tray > button {
  width: 32px;
}

.tray .network {
  width: 80px;
  gap: 8px;
}

.clock {
  width: 66px;
  margin-right: 11px;
  font: 11px/16px "Open Sans", sans-serif;
  text-align: right;
}

.count {
  width: 16px;
  height: 16px;
  border-radius: 50%;
  background: #4cc2ff;
  color: #123;
  font-size: 10px;
  line-height: 16px;
  text-align: center;
}
```
